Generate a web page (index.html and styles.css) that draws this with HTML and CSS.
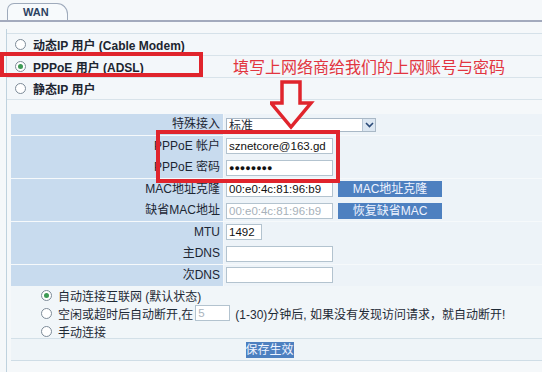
FILE: index.html
```html
<!DOCTYPE html>
<html lang="zh-CN">
<head>
    <meta charset="UTF-8">
    <title>WAN</title>
    <link rel="stylesheet" href="styles.css">
</head>
<body>
    <div class="tabbar">
        <div class="tab">WAN</div>
    </div>
    <div class="panel">
        <div class="modes">
            <div class="mode"><span class="radio"></span>动态IP 用户 (Cable Modem)</div>
            <div class="mode"><span class="radio on"></span>PPPoE 用户 (ADSL)</div>
            <div class="mode"><span class="radio"></span>静态IP 用户</div>
        </div>

        <div class="form">
            <div class="row">
                <div class="label">特殊接入</div>
                <div class="value">
                    <div class="select"><span>标准</span><span class="drop">
                        <svg width="9" height="6" viewBox="0 0 9 6"><path d="M1 1 L4.5 4.5 L8 1" fill="none" stroke="#2b4a78" stroke-width="1.6"/></svg>
                    </span></div>
                </div>
            </div>
            <div class="row">
                <div class="label">PPPoE 帐户</div>
                <div class="value"><div class="input">sznetcore@163.gd</div></div>
            </div>
            <div class="row">
                <div class="label">PPPoE 密码</div>
                <div class="value"><div class="input dots">●●●●●●●●</div></div>
            </div>
            <div class="row">
                <div class="label">MAC地址克隆</div>
                <div class="value"><div class="input">00:e0:4c:81:96:b9</div><div class="btn">MAC地址克隆</div></div>
            </div>
            <div class="row">
                <div class="label">缺省MAC地址</div>
                <div class="value"><div class="input muted">00:e0:4c:81:96:b9</div><div class="btn">恢复缺省MAC</div></div>
            </div>
            <div class="row">
                <div class="label">MTU</div>
                <div class="value"><div class="input short">1492</div></div>
            </div>
            <div class="row">
                <div class="label">主DNS</div>
                <div class="value"><div class="input"></div></div>
            </div>
            <div class="row">
                <div class="label">次DNS</div>
                <div class="value"><div class="input"></div></div>
            </div>

            <div class="connect">
                <div class="opt"><span class="radio on"></span>自动连接互联网 (默认状态)</div>
                <div class="opt"><span class="radio"></span>空闲或超时后自动断开,在<span class="input tiny">5</span>(1-30)分钟后, 如果没有发现访问请求，就自动断开!</div>
                <div class="opt"><span class="radio"></span>手动连接</div>
            </div>
            <div class="save"><span class="btn">保存生效</span></div>
        </div>
    </div>

    <!-- annotations drawn over the screenshot -->
    <div class="mark mark-mode"></div>
    <div class="mark mark-account"></div>
    <div class="note">填写上网络商给我们的上网账号与密码</div>
    <svg class="arrow" width="50" height="52" viewBox="0 0 50 52">
        <path d="M12 2 H30 V23 H41 L21 47 L1 23 H12 Z" fill="#f7f9fb" stroke="#e0242c" stroke-width="3.5" stroke-linejoin="miter"/>
    </svg>
</body>
</html>
```
FILE: styles.css
```css
body { margin: 0; width: 542px; height: 372px; overflow: hidden; position: relative; background: #f5f8fa; font: 12px "Liberation Sans", "Noto Sans CJK SC", sans-serif; color: #1e2a36; }

.tabbar { height: 20px; border-bottom: 2px solid #a3aabd; padding-left: 7px; display: flex; align-items: flex-end; }
.tab { width: 44px; height: 16px; padding-left: 15px; border: 1px solid #9eaabb; border-bottom: none; border-radius: 7px 11px 0 0; background: #f7fafc; color: #2d4262; font-size: 11px; font-weight: bold; line-height: 17px; }

.panel { margin: 7px 0 0 6px; padding-top: 4px; height: 343px; border-left: 1px solid #bfd2de; }

.modes { border-top: 1px solid #d5e1e9; background: #f3f7fa; }
.mode { height: 21px; display: flex; align-items: center; padding-left: 8px; border-bottom: 1px solid #d8e3ea; font-weight: bold; color: #1c2530; }
.radio { width: 11px; height: 11px; box-sizing: border-box; border: 1px solid #7d8b98; border-radius: 50%; background: #fff; margin-right: 7px; display: inline-flex; align-items: center; justify-content: center; flex-shrink: 0; }
.radio.on::after { content: ""; width: 5px; height: 5px; border-radius: 50%; background: #3e9a55; }

.form { margin: 14px 0 0 4px; }
.row { display: grid; grid-template-columns: 212px 1fr; gap: 1px; height: 21.5px; border-bottom: 1px solid #f6f9fb; box-sizing: border-box; }
.label { background: #c8dbee; text-align: right; padding-right: 3px; line-height: 21px; color: #1c2633; }
.value { background: #edf3f8; display: flex; align-items: center; gap: 5px; padding-left: 2px; }

.input { width: 107px; height: 16px; box-sizing: border-box; border: 1px solid #b3c3cf; background: #fff; padding-left: 2px; line-height: 14px; color: #111; font-size: 11.5px; overflow: hidden; white-space: nowrap; }
.input.muted { color: #a7b1ba; }
.input.short { width: 36px; }
.input.dots { font-size: 9px; letter-spacing: 0; }
.select { width: 150px; height: 14px; border: 1px solid #a9b8c6; background: #fff; display: flex; justify-content: space-between; align-items: center; padding-left: 2px; box-sizing: border-box; }
.drop { width: 12px; height: 12px; background: #dce7f2; border-left: 1px solid #b7c6d4; display: flex; align-items: center; justify-content: center; }

.btn { width: 104px; height: 16px; background: #4d80c0; color: #edf3ff; text-align: center; line-height: 16px; }

.connect { padding: 0 0 3px 30px; background: #f1f6f9; border-bottom: 1px solid #d3e0e8; height: 49px; }
.opt { height: 18px; display: flex; align-items: center; white-space: nowrap; }
.opt .radio { margin-right: 6px; }
.input.tiny { width: 35px; margin: 0 5px 0 2px; color: #aab4bd; }

.save { height: 21px; display: flex; align-items: center; justify-content: center; border-bottom: 1px solid #cfdde6; background: #eef4f8; padding-right: 14px; }
.save .btn { width: 48px; height: 16px; }

.mark { position: absolute; box-sizing: border-box; border: 4px solid #e0242c; }
.mark-mode { left: 0; top: 52px; width: 203px; height: 25px; }
.mark-account { left: 156px; top: 130px; width: 184px; height: 53px; }
.note { position: absolute; left: 233px; top: 54px; font: 16px "Noto Sans CJK SC", sans-serif; color: #e2353f; white-space: nowrap; }
.arrow { position: absolute; left: 270px; top: 80px; }
```
